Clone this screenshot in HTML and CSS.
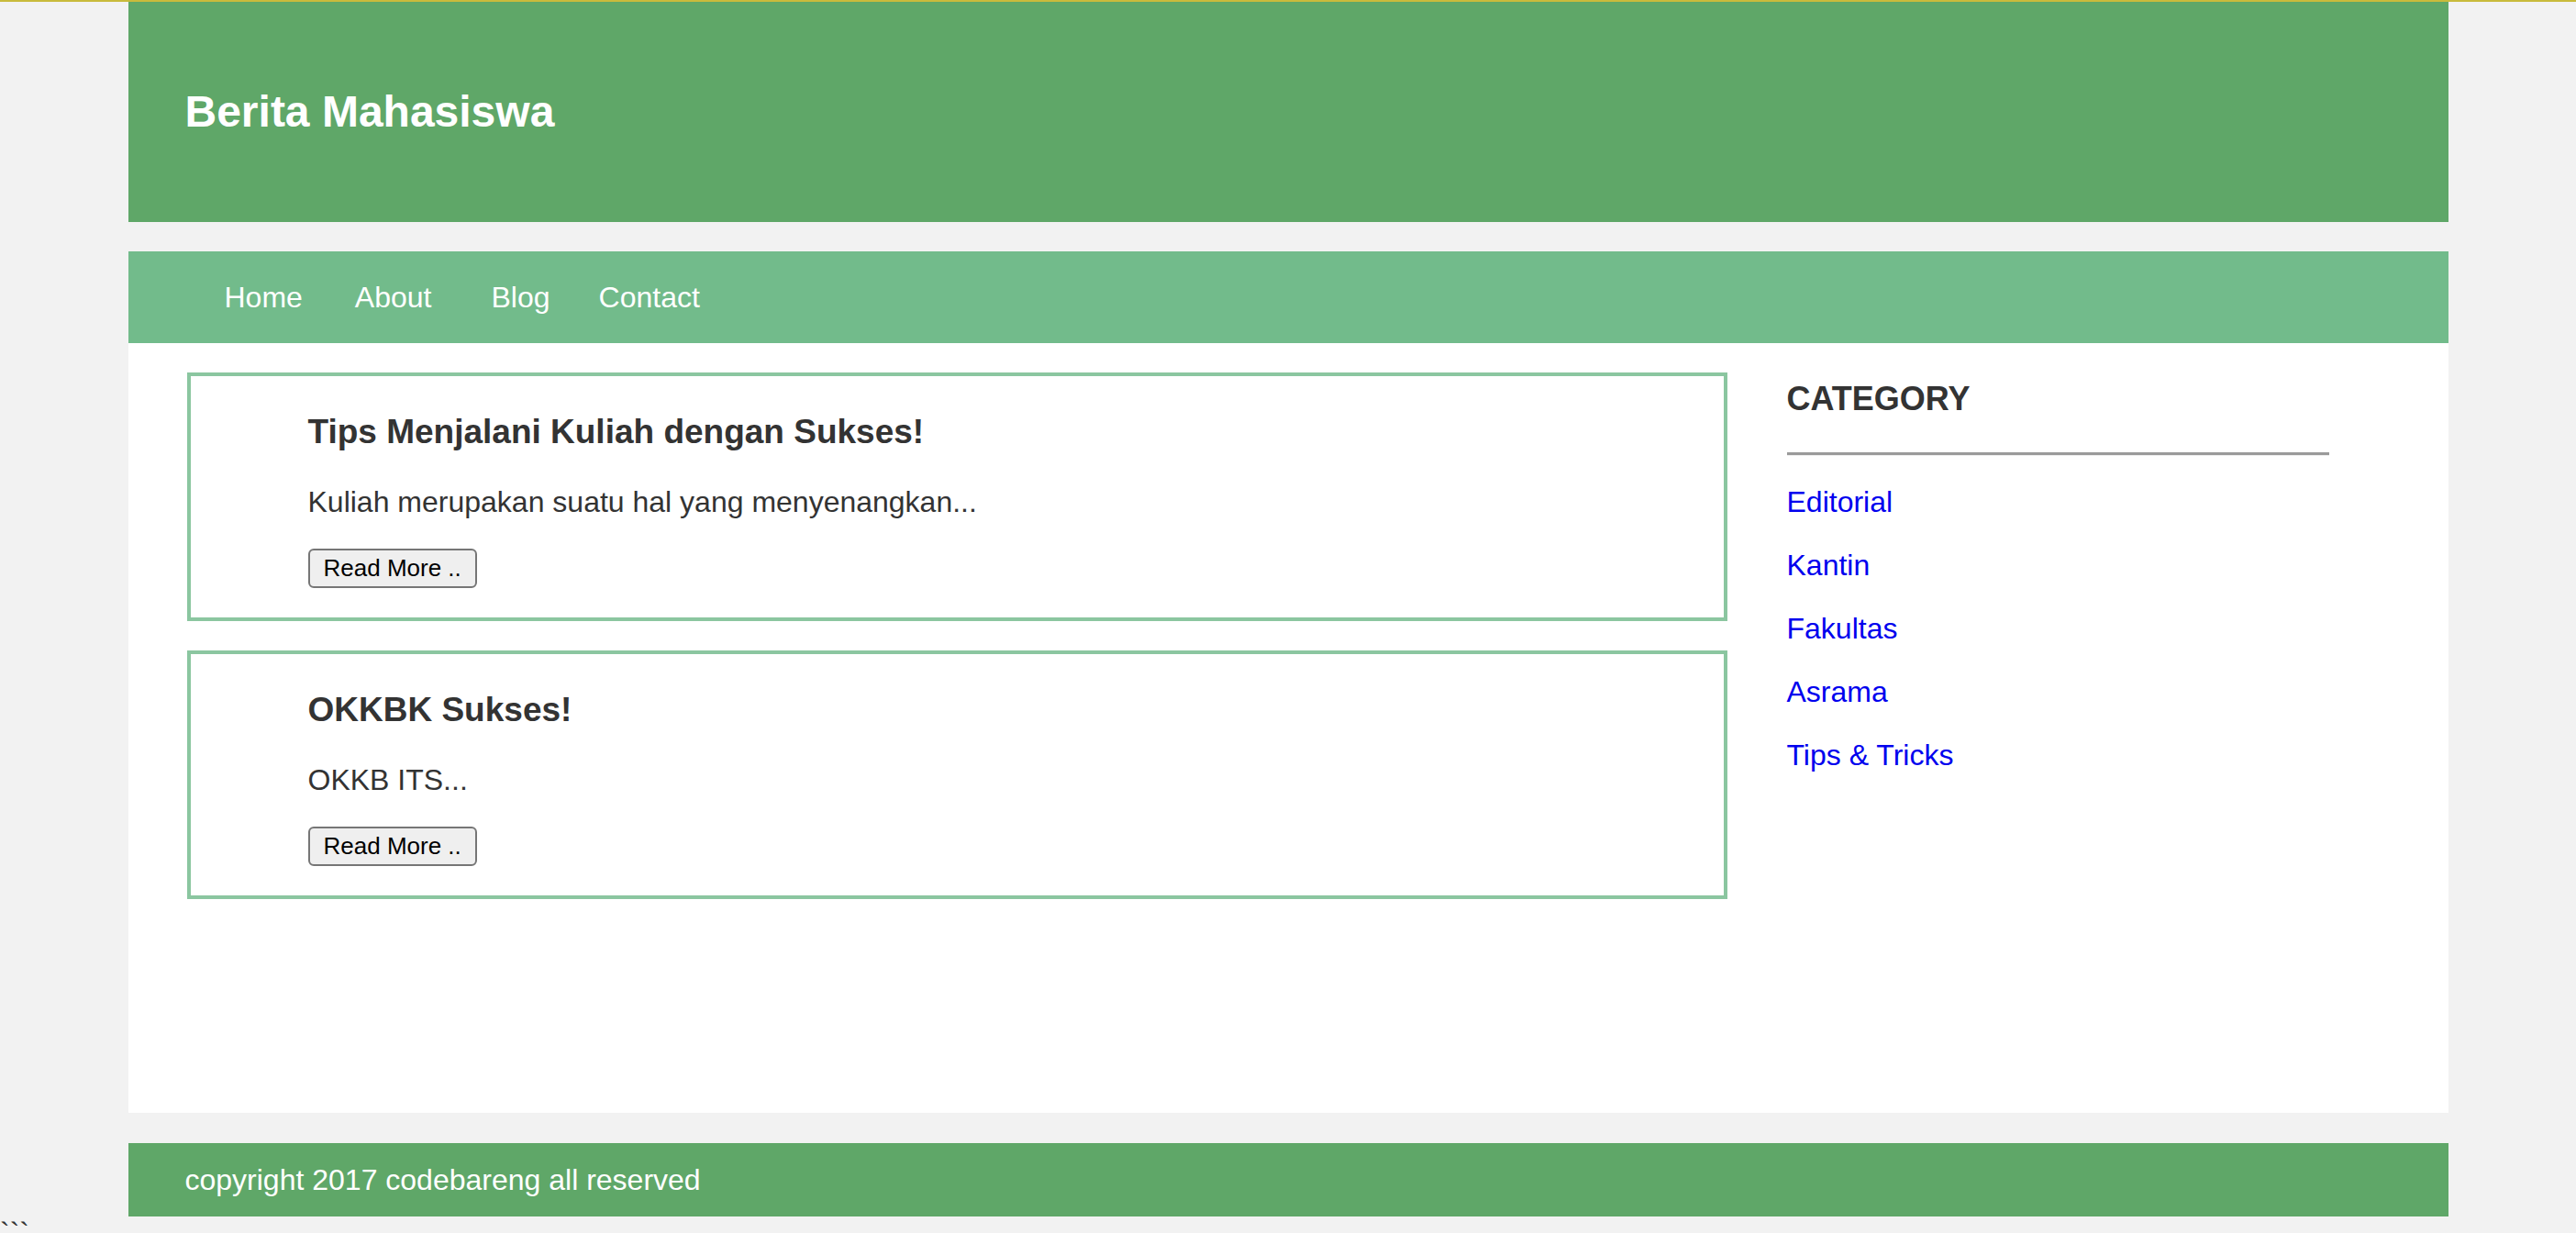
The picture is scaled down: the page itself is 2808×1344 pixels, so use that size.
FILE: index.html
```html
<!DOCTYPE html>
<html lang="id">
<head>
<meta charset="utf-8">
<title>Berita Mahasiswa</title>
<link rel="stylesheet" href="styles.css">
</head>
<body>
<div class="page">
  <header class="site-header">
    <h1 class="site-title">Berita Mahasiswa</h1>
  </header>
  <nav class="site-nav">
    <ul class="nav-list">
      <li class="nav-item nav-home"><a href="#">Home</a></li>
      <li class="nav-item nav-about"><a href="#">About</a></li>
      <li class="nav-item nav-blog"><a href="#">Blog</a></li>
      <li class="nav-item nav-contact"><a href="#">Contact</a></li>
    </ul>
  </nav>
  <main class="content">
    <section class="posts">
      <article class="post">
        <h2 class="post-title">Tips Menjalani Kuliah dengan Sukses!</h2>
        <p class="post-excerpt">Kuliah merupakan suatu hal yang menyenangkan...</p>
        <button class="read-more" type="button">Read More ..</button>
      </article>
      <article class="post">
        <h2 class="post-title">OKKBK Sukses!</h2>
        <p class="post-excerpt">OKKB ITS...</p>
        <button class="read-more" type="button">Read More ..</button>
      </article>
    </section>
    <aside class="sidebar">
      <h3 class="sidebar-title">CATEGORY</h3>
      <hr class="sidebar-rule">
      <ul class="category-list">
        <li><a href="#">Editorial</a></li>
        <li><a href="#">Kantin</a></li>
        <li><a href="#">Fakultas</a></li>
        <li><a href="#">Asrama</a></li>
        <li><a href="#">Tips &amp; Tricks</a></li>
      </ul>
    </aside>
  </main>
  <footer class="site-footer">copyright 2017 codebareng all reserved</footer>
</div>
<div class="stray">```</div>
</body>
</html>
```

FILE: styles.css
```css
html, body {
  margin: 0;
  padding: 0;
  background: #f2f2f2;
}

body {
  border-top: 2px solid #c9bb3c;
  font-family: "Liberation Sans", Arial, Helvetica, sans-serif;
  color: #333;
}

.page {
  width: 2529px;
  margin: 0 auto;
}

.site-header {
  box-sizing: border-box;
  height: 240px;
  padding: 92px 62px 0;
  background: #5fa768;
}

.site-title {
  margin: 0;
  font-size: 48px;
  line-height: 55px;
  font-weight: bold;
  color: #fff;
}

.site-nav {
  box-sizing: border-box;
  margin-top: 32px;
  height: 100px;
  padding-left: 105px;
  background: #72bb8b;
  display: flex;
  align-items: center;
}

.nav-list {
  list-style: none;
  margin: 0;
  padding: 0;
  display: flex;
}

.nav-item a {
  color: #fff;
  text-decoration: none;
  font-size: 32px;
  line-height: 37px;
}

.nav-home { margin-right: 57px; }
.nav-about { margin-right: 65px; }
.nav-blog { margin-right: 53px; }

.content {
  box-sizing: border-box;
  height: 839px;
  padding: 32px 130px 0 64px;
  background: #fff;
  display: grid;
  grid-template-columns: 1679px 591px;
  column-gap: 65px;
  align-content: start;
  align-items: start;
}

.posts {
  display: flex;
  flex-direction: column;
  gap: 32px;
}

.post {
  border: 4px solid #8bc6a0;
  padding: 39px 32px 32px 128px;
}

.post-title {
  margin: 0 0 37px;
  font-size: 37px;
  line-height: 43px;
  font-weight: bold;
  color: #333;
}

.post-excerpt {
  margin: 0 0 32px;
  font-size: 32px;
  line-height: 37px;
  color: #333;
}

.read-more {
  display: block;
  font-family: "Liberation Sans", Arial, Helvetica, sans-serif;
  font-size: 26px;
  line-height: 30px;
  color: #000;
  background: #efefef;
  border: 2px solid #767676;
  border-radius: 6px;
  padding: 4px 15px 5px;
  margin: 0;
}

.sidebar-title {
  margin: 8px 0 38px;
  font-size: 36px;
  line-height: 41px;
  font-weight: bold;
  color: #333;
}

.sidebar-rule {
  margin: 0;
  height: 0;
  border: none;
  border-top: 3px solid #9a9a9a;
  border-bottom: 1px solid #eeeeee;
}

.category-list {
  list-style: none;
  margin: 32px 0 0;
  padding: 0;
}

.category-list li {
  font-size: 32px;
  line-height: 37px;
  margin-bottom: 32px;
}

.category-list a {
  color: #0000ee;
  text-decoration: none;
}

.site-footer {
  box-sizing: border-box;
  margin-top: 33px;
  height: 80px;
  padding-left: 62px;
  background: #5fa768;
  color: #fff;
  font-size: 32px;
  line-height: 37px;
  display: flex;
  align-items: center;
}

.stray {
  height: 18px;
  overflow: hidden;
  font-size: 32px;
  line-height: 37px;
  color: #333;
}
```
